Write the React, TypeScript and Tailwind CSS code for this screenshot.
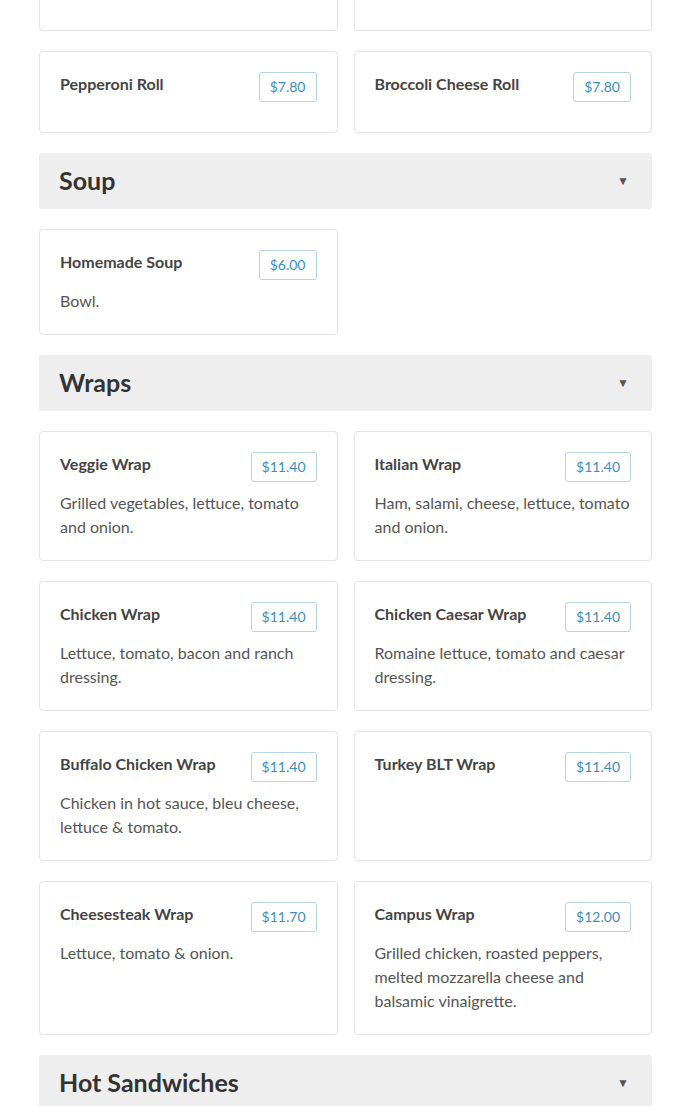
type Item = { name: string; price: string; desc?: string }

type Section = { title: string; items: Item[] }

const rollItems: Item[] = [
  { name: 'Pepperoni Roll', price: '$7.80' },
  { name: 'Broccoli Cheese Roll', price: '$7.80' },
]

const sections: Section[] = [
  {
    title: 'Soup',
    items: [{ name: 'Homemade Soup', price: '$6.00', desc: 'Bowl.' }],
  },
  {
    title: 'Wraps',
    items: [
      { name: 'Veggie Wrap', price: '$11.40', desc: 'Grilled vegetables, lettuce, tomato and onion.' },
      { name: 'Italian Wrap', price: '$11.40', desc: 'Ham, salami, cheese, lettuce, tomato and onion.' },
      { name: 'Chicken Wrap', price: '$11.40', desc: 'Lettuce, tomato, bacon and ranch dressing.' },
      { name: 'Chicken Caesar Wrap', price: '$11.40', desc: 'Romaine lettuce, tomato and caesar dressing.' },
      { name: 'Buffalo Chicken Wrap', price: '$11.40', desc: 'Chicken in hot sauce, bleu cheese, lettuce & tomato.' },
      { name: 'Turkey BLT Wrap', price: '$11.40' },
      { name: 'Cheesesteak Wrap', price: '$11.70', desc: 'Lettuce, tomato & onion.' },
      {
        name: 'Campus Wrap',
        price: '$12.00',
        desc: 'Grilled chicken, roasted peppers, melted mozzarella cheese and balsamic vinaigrette.',
      },
    ],
  },
  { title: 'Hot Sandwiches', items: [] },
]

function MenuCard({ item }: { item: Item }) {
  return (
    <div className="rounded-[4px] border border-[#e4e4e4] bg-white p-5">
      <div className="mb-[10px] flex items-start justify-between gap-3">
        <h3 className="text-[16px] font-bold leading-[24px] text-[#444]">{item.name}</h3>
        <span className="flex h-[30px] shrink-0 items-center rounded-[3px] border border-[#b3d3e2] px-[10px] text-[14px] leading-none text-[#3c8dc5]">
          {item.price}
        </span>
      </div>
      {item.desc && <p className="-mt-[1px] pb-[1px] text-[16px] leading-[24px] text-[#555]">{item.desc}</p>}
    </div>
  )
}

function CardGrid({ items }: { items: Item[] }) {
  return (
    <div className="grid grid-cols-2 gap-x-4 gap-y-5">
      {items.map((item) => (
        <MenuCard key={item.name} item={item} />
      ))}
    </div>
  )
}

function SectionHeader({ title }: { title: string }) {
  return (
    <div className="flex h-[56px] items-center justify-between rounded-[3px] bg-[#eeeeee] pl-5 pr-[23px]">
      <h2 className="pb-[2px] text-[25px] font-bold leading-none text-[#333]">{title}</h2>
      <span className="text-[12px] leading-none text-[#555]">▼</span>
    </div>
  )
}

export default function App() {
  return (
    <div className="h-[1106px] overflow-hidden bg-white font-['Lato','Liberation_Sans',sans-serif]">
      <div className="ml-[39px] flex w-[613px] flex-col gap-5">
        {/* bottom edge of the previous row, scrolled past */}
        <div className="grid grid-cols-2 gap-x-4">
          <div className="h-[31px] rounded-b-[4px] border border-t-0 border-[#e4e4e4]" />
          <div className="h-[31px] rounded-b-[4px] border border-t-0 border-[#e4e4e4]" />
        </div>
        <CardGrid items={rollItems} />
        {sections.map((section) => (
          <div key={section.title} className="flex flex-col gap-5">
            <SectionHeader title={section.title} />
            {section.items.length > 0 && <CardGrid items={section.items} />}
          </div>
        ))}
      </div>
    </div>
  )
}
